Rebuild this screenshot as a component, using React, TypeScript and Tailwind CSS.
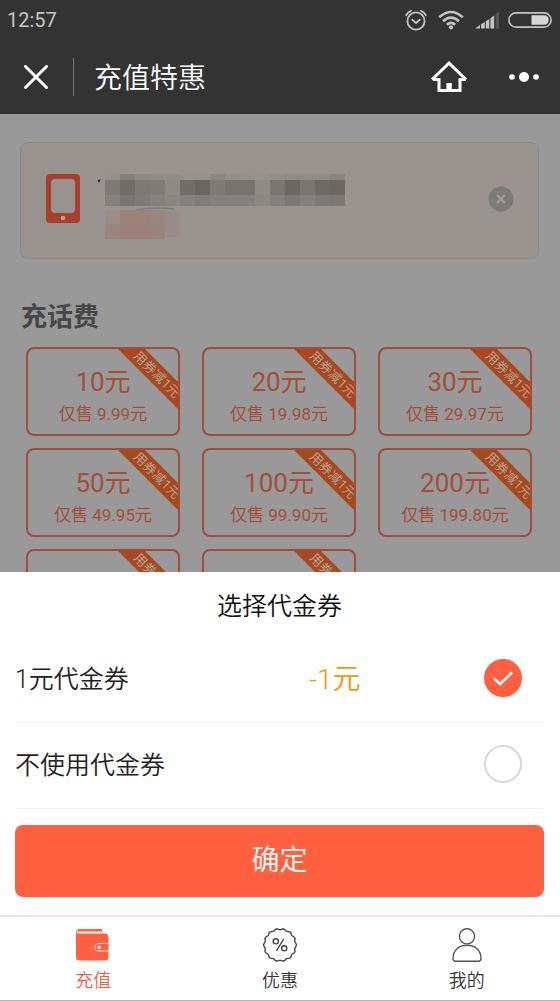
import { useState } from 'react'

const plans = [
    { id: 1, face: 10, price: '9.99' },
    { id: 2, face: 20, price: '19.98' },
    { id: 3, face: 30, price: '29.97' },
    { id: 4, face: 50, price: '49.95' },
    { id: 5, face: 100, price: '99.90' },
    { id: 6, face: 200, price: '199.80' },
    { id: 7 },
    { id: 8 },
]

const coupons = [
    { id: 'one', name: '1元代金券', value: '-1元' },
    { id: 'none', name: '不使用代金券', value: '' },
]

// masked phone number, one shade per 15px block: top, middle and bottom rows
const maskTop = ['#94908c', '#83807c', '#8d8985', '#8f8b87', '#918d89', '#96928e', '#96928e', '#8a8682', '#928e8a', '#94908c', '#96928e', '#928e8a', '#8f8b87', '#8f8b87', '#8f8b87', '#8a8682']
const maskMid = ['#7e7a77', '#716d6a', '#7d7976', '#7f7b78', '#8e8a86', '#716d6a', '#6a6663', '#7e7a77', '#777370', '#777370', '#8f8b87', '#7a7673', '#6b6764', '#797572', '#6e6a67', '#6b6764']
const maskLow = ['#84807d', '#797572', '#7e7a77', '#85817e', '#8a8683', '#85817e', '#807c79', '#85817e', '#85817e', '#85817e', '#8c8885', '#84807d', '#7c7875', '#84807d', '#7e7a77', '#7c7875']

const scallop = Array.from({ length: 120 }, (_, i) => {
    const a = (i / 120) * Math.PI * 2
    const r = 15.8 + 0.6 * Math.cos(a * 14)
    return `${(17 + r * Math.cos(a)).toFixed(2)},${(17 + r * Math.sin(a)).toFixed(2)}`
}).join(' ')

function StatusBar() {
    return (
        <div className="flex h-10 items-center justify-between pl-[7px] pr-2 text-[#c4c4c4]">
            <span className="text-[20px] leading-6">12:57</span>
            <div className="flex items-center gap-[9px]">
                <svg width="22" height="22" viewBox="0 0 22 22" fill="none" stroke="currentColor" strokeWidth="1.8" strokeLinecap="round">
                    <circle cx="11" cy="12" r="8.6" />
                    <path d="M7.2 10.6 11 14l3.8-3.2" />
                    <path d="M1.2 6.2Q2.6 3 6 1.8M20.8 6.2Q19.4 3 16 1.8" />
                </svg>
                <svg className="mx-0.5" width="26" height="20" viewBox="0 0 26 20" fill="none" stroke="currentColor" strokeWidth="2.6">
                    <path d="M1.2 7.2Q13-3.2 24.8 7.2" />
                    <path d="M5 11.2Q13 4 21 11.2" />
                    <path d="M8.8 14.8Q13 11 17.2 14.8" />
                    <circle cx="13" cy="17.3" r="2.1" fill="currentColor" stroke="none" />
                </svg>
                <svg width="24" height="17" viewBox="0 0 24 17" fill="currentColor">
                    <path d="M0 16.5 5 13v3.5zM6 12.3l3.8-2.2v6.4H6zM10.8 9.3l3.5-2.3v9.5h-3.5zM15.4 6.2l3.7-2.7v13h-3.7z" />
                    <path d="M20.5 2 24 0v16.5h-3.5z" fill="#555" />
                </svg>
                <svg width="44" height="16" viewBox="0 0 44 16">
                    <rect x="0.9" y="0.9" width="42.2" height="14.2" rx="7.1" fill="none" stroke="currentColor" strokeWidth="1.6" />
                    <path d="M23.5 3.2H36a4.8 4.8 0 0 1 0 9.6H23.5z" fill="#d6d6d6" />
                </svg>
            </div>
        </div>
    )
}

function TitleBar() {
    return (
        <div className="flex h-[74px] items-center pl-6 pr-5 text-white">
            <button aria-label="关闭">
                <svg width="24" height="24" viewBox="0 0 24 24" fill="none" stroke="currentColor" strokeWidth="3" strokeLinecap="round">
                    <path d="M1.5 1.5l21 21M22.5 1.5l-21 21" />
                </svg>
            </button>
            <span className="ml-[25px] h-[38px] w-px bg-[#777]" />
            <h1 className="ml-5 flex-1 pt-[3px] text-[28px] font-[350] leading-10">充值特惠</h1>
            <button aria-label="首页">
                <svg width="36" height="32" viewBox="0 0 36 32" fill="none" stroke="currentColor" strokeWidth="3">
                    <path d="M1 18.5 18 2.2 35 18.5" />
                    <path d="M2 18.4h6V29.5h21V18.4h6" />
                    <path d="M15.4 22h5.4v8h-5.4z" fill="currentColor" stroke="none" />
                </svg>
            </button>
            <button aria-label="更多" className="ml-[41px]">
                <svg width="32" height="12" viewBox="0 0 32 12" fill="currentColor">
                    <circle cx="4" cy="6" r="2.8" />
                    <circle cx="16" cy="6" r="5" />
                    <circle cx="28" cy="6" r="2.8" />
                </svg>
            </button>
        </div>
    )
}

function PhoneCard() {
    return (
        <div className="ml-5 mr-[21px] flex h-[117px] items-center rounded-lg border border-[#8f8985] bg-[#98938f] pb-1 pl-[25px] pr-6">
            <svg width="34" height="49" viewBox="0 0 34 49">
                <path fillRule="evenodd" fill="#a63f2b" d="M4 0h26A4 4 0 0 1 34 4v41a4 4 0 0 1-4 4H4A4 4 0 0 1 0 45V4A4 4 0 0 1 4 0zM9 5a4 4 0 0 0-4 4v26a4 4 0 0 0 4 4h16a4 4 0 0 0 4-4V9a4 4 0 0 0-4-4z" />
                <circle cx="17" cy="44" r="2.3" fill="#c3a18f" />
            </svg>
            <svg className="ml-[15px]" width="252" height="86" viewBox="0 -15 252 86">
                <path d="M2.5 9.5l3-1.5-1.5 4z" fill="#222" />
                {maskTop.map((fill, i) => <rect key={i} x={10 + i * 15} y="3" width="15" height="6" fill={fill} />)}
                {maskMid.map((fill, i) => <rect key={i} x={10 + i * 15} y="9" width="15" height="15" fill={fill} />)}
                {maskLow.map((fill, i) => <rect key={i} x={10 + i * 15} y="24" width="15" height="11" fill={fill} />)}
                <rect x="10" y="40" width="15" height="14" fill="#998e88" />
                <rect x="25" y="39" width="30" height="15" fill="#9b8379" />
                <rect x="55" y="39" width="15" height="15" fill="#99877f" />
                <rect x="70" y="40" width="15" height="26" rx="3" fill="#998c88" />
                <rect x="10" y="53" width="15" height="15" fill="#9b867c" />
                <rect x="25" y="53" width="30" height="15" fill="#9b8176" />
                <rect x="55" y="53" width="15" height="15" fill="#9a837a" />
                <path d="M41 39Q60 35.5 79 38" fill="none" stroke="#827e7a" strokeWidth="1.5" />
            </svg>
            <button aria-label="清除" className="ml-auto">
                <svg width="26" height="26" viewBox="0 0 26 26">
                    <circle cx="13" cy="13" r="12.5" fill="#7d7b7a" />
                    <path d="M9 9l8 8M17 9l-8 8" stroke="#9f9c9a" strokeWidth="2" />
                </svg>
            </button>
        </div>
    )
}

function PlanButton({ face, price }: { face?: number; price?: string }) {
    return (
        <button className="relative flex h-[89px] flex-col items-center overflow-hidden rounded-lg border-2 border-[#a34c38] pt-[15px] text-[#a34f38]">
            {face && <span className="text-[26px] leading-9">{face}元</span>}
            {price && <span className="text-[17px] leading-7">仅售 {price}元</span>}
            <span className="absolute -right-[34px] top-4 h-[19px] w-[110px] rotate-45 bg-[#a8481f] text-center text-[13px] leading-[19px] text-[#b5a395]">
                用券减1元
            </span>
        </button>
    )
}

function CouponSheet() {
    const [selected, setSelected] = useState('one')

    return (
        <section className="bg-white pb-[18px] pl-[15px] pr-4">
            <h2 className="flex h-[65px] items-center justify-center pt-[5px] text-[25px] font-[350] text-[#111]">选择代金券</h2>
            {coupons.map((c) => (
                <label key={c.id} className="flex h-[86px] items-center border-b border-[#f3f3f3] pb-[3px] pr-[22px] text-[#222]">
                    <span className="w-[58%] pt-[3px] text-[25px] font-[350]">{c.name}</span>
                    <span className="pt-[3px] text-[28px] font-[350] text-[#f39800]">{c.value}</span>
                    <span className="relative ml-auto h-[38px] w-[38px]">
                        <input
                            type="radio"
                            name="coupon"
                            checked={selected === c.id}
                            onChange={() => setSelected(c.id)}
                            className="block h-[38px] w-[38px] appearance-none rounded-full border-2 border-[#d8d8d8] checked:border-[#ff6040] checked:bg-[#ff6040]"
                        />
                        {selected === c.id && (
                            <svg className="pointer-events-none absolute inset-0" width="38" height="38" viewBox="0 0 38 38" fill="none" stroke="#fff" strokeWidth="2.6">
                                <path d="M10 19.5l6.2 5.5L28 13.5" />
                            </svg>
                        )}
                    </span>
                </label>
            ))}
            <button className="mt-4 h-[72px] w-full rounded-lg bg-[#ff6040] text-[28px] font-[350] text-white">确定</button>
        </section>
    )
}

function TabBar() {
    return (
        <nav className="grid grid-cols-3 border-b border-t-2 border-b-[#b5b5b5] border-t-[#e8e8e8] bg-white pb-[5px] pt-[11px] text-[18px] font-[350] leading-7 text-[#333]">
            <a href="#recharge" className="flex flex-col items-center text-[#f06048]">
                <svg width="34" height="34" viewBox="0 0 34 34">
                    <path d="M2 1h24v3H2z" fill="#ff6040" />
                    <path d="M1.5 1Q0 1 0 3v26q0 3.500 3.5 3.500h25.500q3.500 0 3.500-3.500V9.500q0-4-4-4H2.500Q0.500 5.500 0.500 3.500z" fill="#ff6040" />
                    <path d="M2.5 3.700h23.500M26 3.700v2" stroke="#ffc1b3" strokeWidth="0.9" fill="none" />
                    <path d="M33 15.500H22.500a3.700 3.700 0 0 0 0 7.400H33" fill="none" stroke="#ffd5cb" strokeWidth="1.1" />
                    <circle cx="23.2" cy="19.2" r="1.7" fill="#fff" />
                </svg>
                <span className="mt-[5px]">充值</span>
            </a>
            <a href="#offers" className="flex flex-col items-center">
                <svg width="34" height="34" viewBox="0 0 34 34" fill="none" stroke="#444" strokeWidth="1.4">
                    <polygon points={scallop} />
                    <circle cx="12.8" cy="13.3" r="2.6" />
                    <circle cx="21.2" cy="20.3" r="2.6" />
                    <path d="M20.6 11l-7.2 12" />
                </svg>
                <span className="mt-[5px]">优惠</span>
            </a>
            <a href="#me" className="flex flex-col items-center">
                <svg width="34" height="34" viewBox="0 0 34 34" fill="none" stroke="#555" strokeWidth="1.4">
                    <circle cx="17" cy="8.3" r="7.6" />
                    <path d="M3 30.5C3 22 9 17.3 17 17.3S31 22 31 30.5q0 2.7-2.5 2.7h-23Q3 33.2 3 30.5z" />
                </svg>
                <span className="mt-[5px]">我的</span>
            </a>
        </nav>
    )
}

export default function App() {
    return (
        <div className="flex h-screen flex-col bg-[#999] font-['Roboto','Noto_Sans_CJK_SC',sans-serif]">
            <header className="bg-[#333]">
                <StatusBar />
                <TitleBar />
            </header>

            <main className="min-h-0 flex-1 overflow-hidden pt-7">
                <PhoneCard />
                <h2 className="ml-[21px] mt-[38px] text-[26px] font-bold leading-10 text-[#474747]">充话费</h2>
                <div className="mt-2.5 grid grid-cols-3 gap-x-[22px] gap-y-3 pl-[26px] pr-7">
                    {plans.map((plan) => (
                        <PlanButton key={plan.id} face={plan.face} price={plan.price} />
                    ))}
                </div>
            </main>

            <CouponSheet />
            <TabBar />
        </div>
    )
}
